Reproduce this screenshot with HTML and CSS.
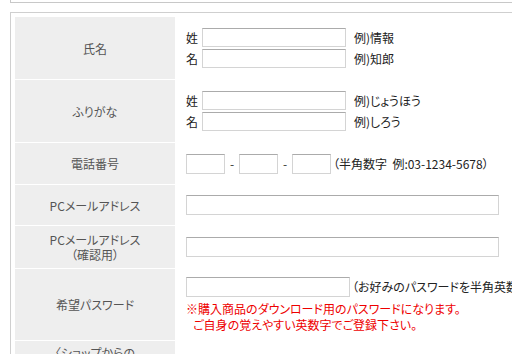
FILE: index.html
```html
<!DOCTYPE html>
<html lang="ja">
<head>
<meta charset="utf-8">
<title>会員登録</title>
<link rel="stylesheet" href="styles.css">
</head>
<body>
<div class="page">
  <div class="prev-box"></div>
  <div class="form-box">
    <div class="form-grid">
      <div class="label">氏名</div>
      <div class="value stack">
        <div class="line"><span class="pre">姓</span><input class="name-input" type="text"><span class="hint">例)情報</span></div>
        <div class="line"><span class="pre">名</span><input class="name-input" type="text"><span class="hint">例)知郎</span></div>
      </div>

      <div class="label">ふりがな</div>
      <div class="value stack">
        <div class="line"><span class="pre">姓</span><input class="name-input" type="text"><span class="hint">例)じょうほう</span></div>
        <div class="line"><span class="pre">名</span><input class="name-input" type="text"><span class="hint">例)しろう</span></div>
      </div>

      <div class="label">電話番号</div>
      <div class="value">
        <div class="line"><input class="tel-input" type="text"><span class="dash">-</span><input class="tel-input" type="text"><span class="dash">-</span><input class="tel-input" type="text"><span class="tel-hint">（半角数字&nbsp;&nbsp;例:03-1234-5678）</span></div>
      </div>

      <div class="label">PCメールアドレス</div>
      <div class="value">
        <input class="mail-input" type="text">
      </div>

      <div class="label two-line">PCメールアドレス<br>（確認用）</div>
      <div class="value">
        <input class="mail-input" type="text">
      </div>

      <div class="label">希望パスワード</div>
      <div class="value stack">
        <div class="line"><input class="pass-input" type="password"><span class="pass-hint">（お好みのパスワードを半角英数字で入力して下さい）</span></div>
        <p class="note">※購入商品のダウンロード用のパスワードになります。<br><span class="note-indent">ご自身の覚えやすい英数字でご登録下さい。</span></p>
      </div>

      <div class="label last">〈ショップからの<br>お知らせ〉</div>
      <div class="value"></div>
    </div>
  </div>
</div>
</body>
</html>
```

FILE: styles.css
```css
html, body {
  margin: 0;
  padding: 0;
  background: #ffffff;
  overflow: hidden;
}

body {
  font-family: "Noto Sans CJK JP", "Noto Sans", sans-serif;
  font-size: 12px;
  color: #333333;
  font-feature-settings: "palt";
}

.page {
  padding-left: 10px;
  width: 620px;
}

.prev-box {
  height: 2px;
  border: 1px solid #c8c8c8;
  border-top: none;
}

.form-box {
  margin-top: 9px;
  border: 1px solid #cfcfcf;
  padding: 4px;
}

.form-grid {
  display: grid;
  grid-template-columns: 160px 1fr;
  grid-template-rows: 62px 62px 41px 40px 42px 71px 40px;
  row-gap: 1px;
}

.label {
  background: #eeeeee;
  color: #555555;
  display: flex;
  align-items: center;
  justify-content: center;
  text-align: center;
  line-height: 15px;
}

.label.last {
  align-items: flex-start;
  padding-top: 4px;
}

.value {
  padding-left: 11px;
  display: flex;
  flex-direction: column;
  justify-content: center;
}

.stack {
  gap: 2px;
}

.line {
  display: flex;
  align-items: center;
  white-space: nowrap;
}

.pre {
  width: 16px;
  color: #222222;
}

input {
  box-sizing: border-box;
  margin: 0;
  padding: 0 3px;
  border: 1px solid #d4d4d4;
  border-top-color: #ababab;
  background: #ffffff;
  font: inherit;
}

.name-input {
  width: 144px;
  height: 19px;
}

.hint {
  margin-left: 8px;
  color: #222222;
}

.tel-input {
  width: 39px;
  height: 20px;
}

.dash {
  width: 14px;
  text-align: center;
}

.tel-hint {
  margin-left: 2px;
  color: #222222;
}

.mail-input {
  width: 313px;
  height: 20px;
}

.pass-input {
  width: 164px;
  height: 20px;
}

.pass-hint {
  margin-left: 2px;
  color: #222222;
}

.note {
  margin: 2px 0 0;
  color: #ee0000;
  line-height: 16px;
  white-space: nowrap;
}

.note-indent {
  padding-left: 7px;
}
```
